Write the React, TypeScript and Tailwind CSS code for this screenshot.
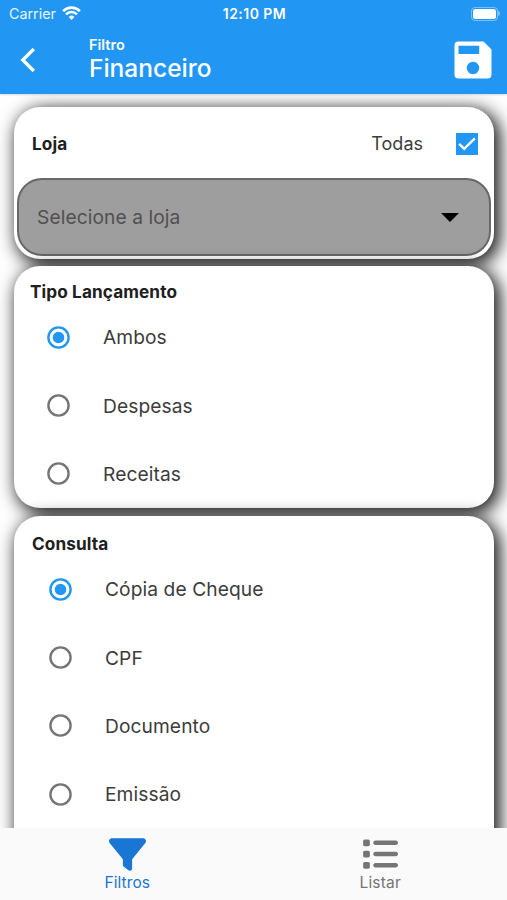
import React from "react";
import { FaFilter, FaList } from "react-icons/fa6";

const cardShadow =
  "rounded-[26px] bg-white shadow-[4px_4px_17px_2px_rgba(0,0,0,0.9)]";

function Radio({ checked }: { checked?: boolean }) {
  return (
    <svg
      width="23"
      height="23"
      viewBox="0 0 23 23"
      fill="none"
      className={"shrink-0 " + (checked ? "text-[#2196f3]" : "text-[#757575]")}
    >
      <circle cx="11.5" cy="11.5" r="10.1" stroke="currentColor" strokeWidth="2.4" />
      {checked && <circle cx="11.5" cy="11.5" r="5.8" fill="currentColor" />}
    </svg>
  );
}

function Option({ label, checked }: { label: string; checked?: boolean }) {
  return (
    <div className="flex h-[68.4px] items-center">
      <Radio checked={checked} />
      <span className="ml-[33px] whitespace-nowrap text-[19.2px] leading-[24px] tracking-[0.08px] text-[#3c3c3c]">
        {label}
      </span>
    </div>
  );
}

export default function App() {
  return (
    <div className="flex h-[900px] w-[507px] flex-col overflow-hidden bg-[#fefefe] font-['Inter','Liberation_Sans',sans-serif]">
      <header className="z-10 flex h-[94px] shrink-0 flex-col bg-[#2196f3] text-white shadow-[0_1px_2px_rgba(0,0,0,0.15)]">
        <div className="grid h-[27px] grid-cols-3 items-center pl-[9px] pr-[7px]">
          <div className="flex items-center gap-[6px] text-[14.3px] text-white/90">
            <span>Carrier</span>
            <svg width="19" height="14" viewBox="0 0 19 14" fill="none" stroke="white" strokeWidth="2.6" className="mb-[2px]">
              <path d="M1.1 5.1a11.9 11.9 0 0 1 16.8 0" />
              <path d="M4 8.3a7.8 7.8 0 0 1 11 0" />
              <path d="M9.5 13.9l-2.9-3a4.1 4.1 0 0 1 5.8 0z" fill="white" stroke="none" />
            </svg>
          </div>
          <div className="whitespace-nowrap text-center text-[14px] font-semibold tracking-[0.45px]">12:10 PM</div>
          <div className="flex items-center justify-end">
            <span className="flex h-[14px] w-[27px] rounded-[4px] border border-white/40 p-[1px]">
              <span className="flex-1 rounded-[2.5px] bg-white" />
            </span>
            <span className="h-[5px] w-[2px] rounded-r-full bg-white/40" />
          </div>
        </div>
        <div className="flex h-[67px] items-center pl-[20px] pr-[15px]">
          <svg width="16" height="26" viewBox="0 0 16 26" fill="none" stroke="white" strokeWidth="3.3" className="mb-[1px]">
            <path d="M13.8 2L2.8 13L13.8 24" />
          </svg>
          <div className="ml-[53px] flex flex-1 flex-col pb-[2px]">
            <span className="text-[14.5px] font-semibold leading-[18px]">Filtro</span>
            <span className="text-[24.5px] font-medium leading-[29px]">Financeiro</span>
          </div>
          <svg width="38" height="38" viewBox="0 0 38 38" fill="white" className="mb-[1px]">
            <path
              fillRule="evenodd"
              d="M4.5 0.5H29.5L37.5 8.5V33.5a4 4 0 0 1-4 4H4.5a4 4 0 0 1-4-4V4.5a4 4 0 0 1 4-4ZM4.5 4.8V13H25.2V4.8ZM19 20.8a6.2 6.2 0 1 0 0 12.4a6.2 6.2 0 0 0 0-12.4Z"
            />
          </svg>
        </div>
      </header>

      <main className="flex min-h-0 flex-1 flex-col gap-[7px] overflow-hidden pl-[14px] pr-[13px] pt-[13px]">
        <section className={cardShadow + " flex h-[152px] shrink-0 flex-col px-[3px]"}>
          <div className="flex h-[71px] items-center pl-[15px] pr-[13px] pt-[3px]">
            <span className="flex-1 text-[17.2px] font-bold tracking-[0.1px] text-[#202020]">Loja</span>
            <span className="pb-[1px] text-[18px] text-[#3c3c3c]">Todas</span>
            <span className="ml-[33px] flex size-[22px] items-center justify-center bg-[#2196f3]">
              <svg width="18" height="14" viewBox="0 0 18 14" fill="none" stroke="white" strokeWidth="2.5">
                <path d="M1.2 6.8L6.2 11.8L16.8 1.4" />
              </svg>
            </span>
          </div>
          <div className="flex h-[78px] items-center rounded-[25px] border-2 border-[#686868] bg-[#9e9e9e] pl-[18px] pr-[30px]">
            <span className="flex-1 pt-[1px] text-[19.2px] tracking-[0.08px] text-[#505050]">Selecione a loja</span>
            <svg width="18" height="9" viewBox="0 0 18 9">
              <path d="M0 0H18L9 9Z" fill="black" />
            </svg>
          </div>
        </section>

        <section className={cardShadow + " flex h-[242px] shrink-0 flex-col pl-[16px]"}>
          <h2 className="pt-[14px] text-[17.2px] font-bold leading-[24px] tracking-[0.1px] text-[#202020]">
            Tipo Lançamento
          </h2>
          <div className="-mt-[1px] pl-[17px]">
            <Option label="Ambos" checked />
            <Option label="Despesas" />
            <Option label="Receitas" />
          </div>
        </section>

        <section className={cardShadow + " mt-[1px] flex h-[380px] shrink-0 flex-col pl-[18px]"}>
          <h2 className="pt-[16px] text-[17.2px] font-bold leading-[24px] tracking-[0.1px] text-[#202020]">
            Consulta
          </h2>
          <div className="-mt-[1px] pl-[17px]">
            <Option label="Cópia de Cheque" checked />
            <Option label="CPF" />
            <Option label="Documento" />
            <Option label="Emissão" />
          </div>
        </section>
      </main>

      <nav className="z-10 grid h-[72px] shrink-0 grid-cols-2 bg-[#fafafa]">
        <div className="flex flex-col items-center pl-[1px] pt-[8px] text-[#1976d2]">
          <FaFilter size={37} />
          <span className="text-[15.5px] leading-[20px] tracking-[0.1px]">Filtros</span>
        </div>
        <div className="flex flex-col items-center pt-[8px] text-[#757575]">
          <FaList size={36} className="mb-[1px]" />
          <span className="text-[15.5px] leading-[20px] tracking-[0.2px]">Listar</span>
        </div>
      </nav>
    </div>
  );
}
